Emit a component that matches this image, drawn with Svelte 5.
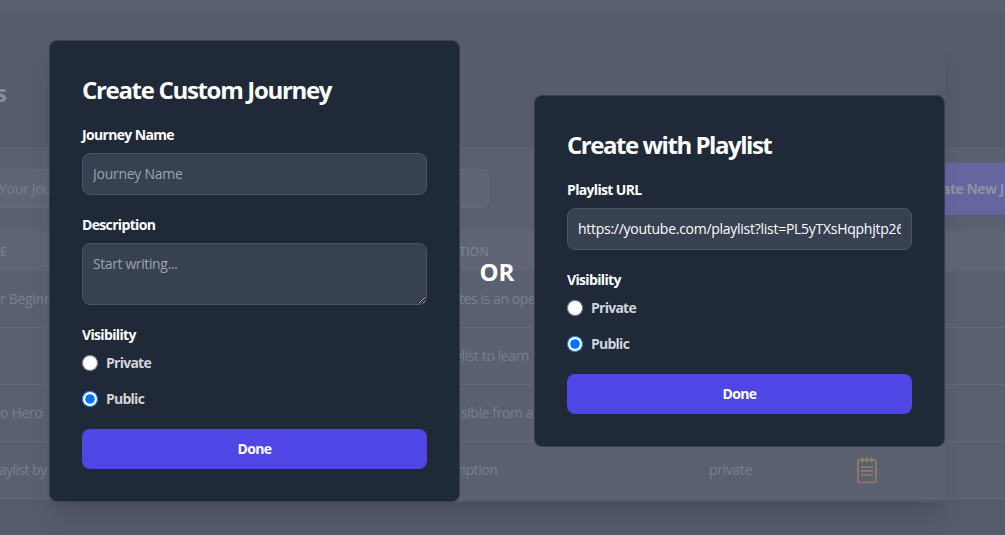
<script>
  const rows = [
    { title: 'r Beginn', desc: 'tes is an ope', shift: 0, vis: '', note: false },
    { title: '', desc: 'ylist to learn', shift: -4, vis: '', note: false },
    { title: 'o Hero', desc: 'sible from a', shift: 2, vis: '', note: false },
    { title: 'aylist by', desc: 'ription', shift: -2, vis: 'private', note: true }
  ];
  let journeyVisibility = 'public';
  let playlistVisibility = 'public';
  let url = 'https://youtube.com/playlist?list=PL5yTXsHqphjtp26';
</script>

<div class="page">
  <div class="topbar"></div>
  <div class="title">s</div>
  <div class="card">
    <div class="toolbar">
      <div class="search">Your Journeys</div>
      <div class="new">ate New J</div>
    </div>
    <div class="row head">
      <span>E</span><span>TION</span><span></span><span></span>
    </div>
    {#each rows as row}
      <div class="row">
        <span class:end={row.title === 'aylist by'}>{row.title}</span>
        <span class="desc" style="margin-left: {row.shift}px">{row.desc}</span>
        <span>{row.vis}</span>
        <span class="icon">
          {#if row.note}
            <svg width="22" height="28" viewBox="0 0 22 28" fill="none" stroke="url(#note)" stroke-width="1.7" stroke-linecap="round">
              <defs>
                <linearGradient id="note" gradientUnits="userSpaceOnUse" x1="0" y1="0" x2="0" y2="28">
                  <stop offset="0" stop-color="#918666" />
                  <stop offset="1" stop-color="#967567" />
                </linearGradient>
              </defs>
              <rect x="2" y="4" width="18" height="22.5" rx="1.8" />
              <path d="M6.5 1.8v4M11 1.8v4M15.5 1.8v4M5.7 11h10.6M5.7 14.9h10.6M5.7 18.8h10.6" />
            </svg>
          {/if}
        </span>
      </div>
    {/each}
  </div>

  <div class="overlay">
    <div class="dialog">
      <form class="modal">
        <h2>Create Custom Journey</h2>
        <label class="label" for="name">Journey Name</label>
        <input class="field" id="name" placeholder="Journey Name" />
        <label class="label" for="description">Description</label>
        <textarea class="field" id="description" placeholder="Start writing..."></textarea>
        <div class="label">Visibility</div>
        <label class="radio"><input type="radio" value="private" bind:group={journeyVisibility} />Private</label>
        <label class="radio"><input type="radio" value="public" bind:group={journeyVisibility} />Public</label>
        <button type="button">Done</button>
      </form>
      <div class="or">OR</div>
      <form class="modal">
        <h2 class="narrow">Create with Playlist</h2>
        <label class="label" for="url">Playlist URL</label>
        <input class="field" id="url" bind:value={url} />
        <div class="label">Visibility</div>
        <label class="radio"><input type="radio" value="private" bind:group={playlistVisibility} />Private</label>
        <label class="radio"><input type="radio" value="public" bind:group={playlistVisibility} />Public</label>
        <button type="button">Done</button>
      </form>
    </div>
  </div>
</div>

<style>
  :global(body) { margin: 0; overflow: hidden; }
  * { box-sizing: border-box; }
  .page {
    position: relative; width: 1005px; height: 535px; overflow: hidden;
    background: #555b6a; color: #78808c;
    font: 14px/20px "Open Sans", sans-serif; letter-spacing: -0.3px;
  }
  .topbar { height: 15px; background: #5a6070; border-bottom: 1px solid #585e6d; }
  .title {
    height: 132px; padding-top: 62px; margin-left: -5px;
    font-size: 24px; line-height: 32px; font-weight: 700; color: #8b8f98;
  }
  .card { height: 352px; background: #5a6070; }
  .toolbar { height: 84px; padding-top: 16px; display: flex; justify-content: space-between; }
  .search {
    width: 500px; height: 39px; margin: 6px 0 0 -11px; padding: 9px;
    border: 1px solid #656b7a; border-radius: 8px; background: #5f6575;
  }
  .new {
    width: 105px; height: 52px; padding: 16px 0 0 42px;
    background: #65669f; color: #8f939f; font-weight: 700; letter-spacing: -0.5px; white-space: nowrap; overflow: hidden;
  }
  .row {
    height: 57px; display: grid; grid-template-columns: 459px 250px 147px 149px;
    align-items: center; border-bottom: 1px solid #626877; white-space: nowrap;
  }
  .row.head {
    height: 40px; background: #5f6575; border: 0; padding-top: 1px;
    font-size: 12px; font-weight: 600; letter-spacing: 0.2px;
  }
  .desc { letter-spacing: -0.42px; }
  .end { margin-left: -1px; letter-spacing: -0.6px; }
  .icon { height: 28px; }
  .icon svg { display: block; }

  .overlay {
    position: absolute; inset: 7px 0 0; display: flex; justify-content: center;
    align-items: center; padding-right: 11px;
  }
  .dialog {
    display: flex; align-items: center; border-radius: 8px;
    box-shadow: 0 20px 25px -5px rgb(0 0 0 / 0.1), 0 8px 10px -6px rgb(0 0 0 / 0.1);
  }
  .or {
    width: 74px; padding-top: 2px; text-align: center; font-size: 24px; line-height: 32px;
    font-weight: 700; color: #fff; letter-spacing: 0;
  }
  .modal {
    display: flex; flex-direction: column; width: 411px; padding: 33px 32px 32px;
    border: 1px solid #374151; border-radius: 8px; background: #202937;
  }
  h2 { margin: 0 0 19px; font-size: 24px; line-height: 32px; font-weight: 700; letter-spacing: -1.32px; color: #fff; white-space: nowrap; }
  h2.narrow { letter-spacing: -1.46px; }
  .label { margin-bottom: 8px; font-weight: 700; letter-spacing: -0.66px; color: #fff; }
  .field {
    display: block; width: 100%; height: 42px; margin: 0 0 20px; padding: 9px 10px 11px;
    border: 1px solid #4b5563; border-radius: 8px; background: #374151;
    font: inherit; letter-spacing: -0.27px; color: #fff; outline: none;
  }
  .field::placeholder { color: #9ca3af; opacity: 1; }
  textarea.field { height: 62px; padding: 10px; letter-spacing: -0.4px; }
  .radio {
    display: flex; align-items: center; gap: 8px; height: 20px; margin-bottom: 16px;
    font-weight: 700; letter-spacing: -0.75px; color: #d1d5db;
  }
  .radio input { width: 16px; height: 16px; margin: 0; }
  button {
    height: 40px; margin-top: 4px; padding: 0; border: 0; border-radius: 8px;
    background: #4f46e5; color: #fff; font: 700 14px/20px "Open Sans", sans-serif; letter-spacing: -0.6px;
  }
</style>
